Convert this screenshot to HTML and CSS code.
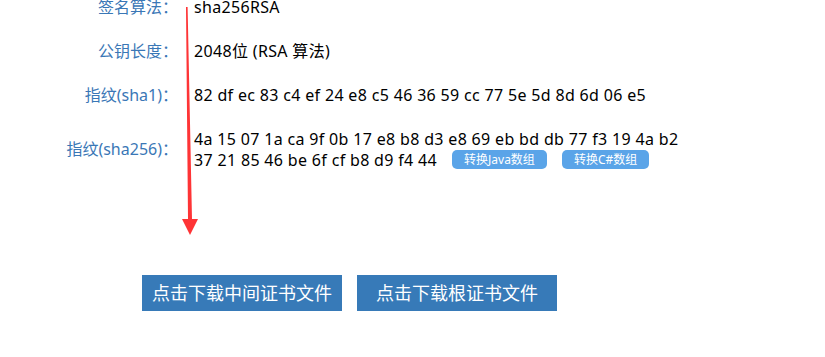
FILE: index.html
```html
<!DOCTYPE html>
<html>
<head>
    <meta charset="UTF-8">
    <title>证书信息</title>
    <link rel="stylesheet" href="styles.css">
</head>
<body>
    <div id="cert_box">
        <!--证书信息-->
        <div class="info_table">
            <div class="info_row">
                <span class="info_label">签名算法：</span>
                <span class="info_value">sha256RSA</span>
            </div>
            <div class="info_row">
                <span class="info_label">公钥长度：</span>
                <span class="info_value">2048位 (RSA 算法)</span>
            </div>
            <div class="info_row">
                <span class="info_label">指纹(sha1)：</span>
                <span class="info_value">82 df ec 83 c4 ef 24 e8 c5 46 36 59 cc 77 5e 5d 8d 6d 06 e5</span>
            </div>
            <div class="info_row">
                <span class="info_label">指纹(sha256)：</span>
                <span class="info_value">4a 15 07 1a ca 9f 0b 17 e8 b8 d3 e8 69 eb bd db 77 f3 19 4a b2<br>37 21 85 46 be 6f cf b8 d9 f4 44<a class="btn_small btn_java">转换Java数组</a><a class="btn_small">转换C#数组</a></span>
            </div>
        </div>

        <!--下载按钮-->
        <div class="btn_row">
            <a class="btn_down">点击下载中间证书文件</a>
            <a class="btn_down">点击下载根证书文件</a>
        </div>

        <!--红色箭头-->
        <svg class="red_arrow" width="30" height="260" viewBox="0 0 30 260">
            <polygon points="6,22 7.6,22 12,234 18,234 10,250 2,234 8,234" fill="#fe3436"/>
        </svg>
    </div>
</body>
</html>
```

FILE: styles.css
```css
/*全局样式*/
* {padding:0px;margin:0px;}
html,body {width:100%;height:100%;background:#fff;overflow:hidden;}
body {font-family:"Noto Sans","Noto Sans CJK SC",sans-serif;font-size:16px;color:#000;}

#cert_box {position:relative;width:100%;height:100%;}

/*信息表格*/
.info_table {margin-top:-15px;}
.info_row {display:flex;padding:11.5px 0;line-height:21px;}
.info_label {width:178px;text-align:right;color:#3a77b6;flex:none;display:flex;flex-direction:column;justify-content:center;}
.info_value {margin-left:16px;letter-spacing:0.33px;}

.btn_small {display:inline-block;height:19px;line-height:19px;padding:0 12px;margin-left:15px;border-radius:5px;background:#5aa4e8;color:#fff;font-size:12px;letter-spacing:0;vertical-align:middle;position:relative;top:-2px;}

/*下载按钮*/
.btn_row {display:flex;gap:15px;padding-left:142px;margin-top:93px;}
.btn_down {display:block;width:200px;height:36px;line-height:36px;text-align:center;background:#377ab8;color:#fff;font-size:18px;}

.red_arrow {position:absolute;left:180px;top:0;}
```
